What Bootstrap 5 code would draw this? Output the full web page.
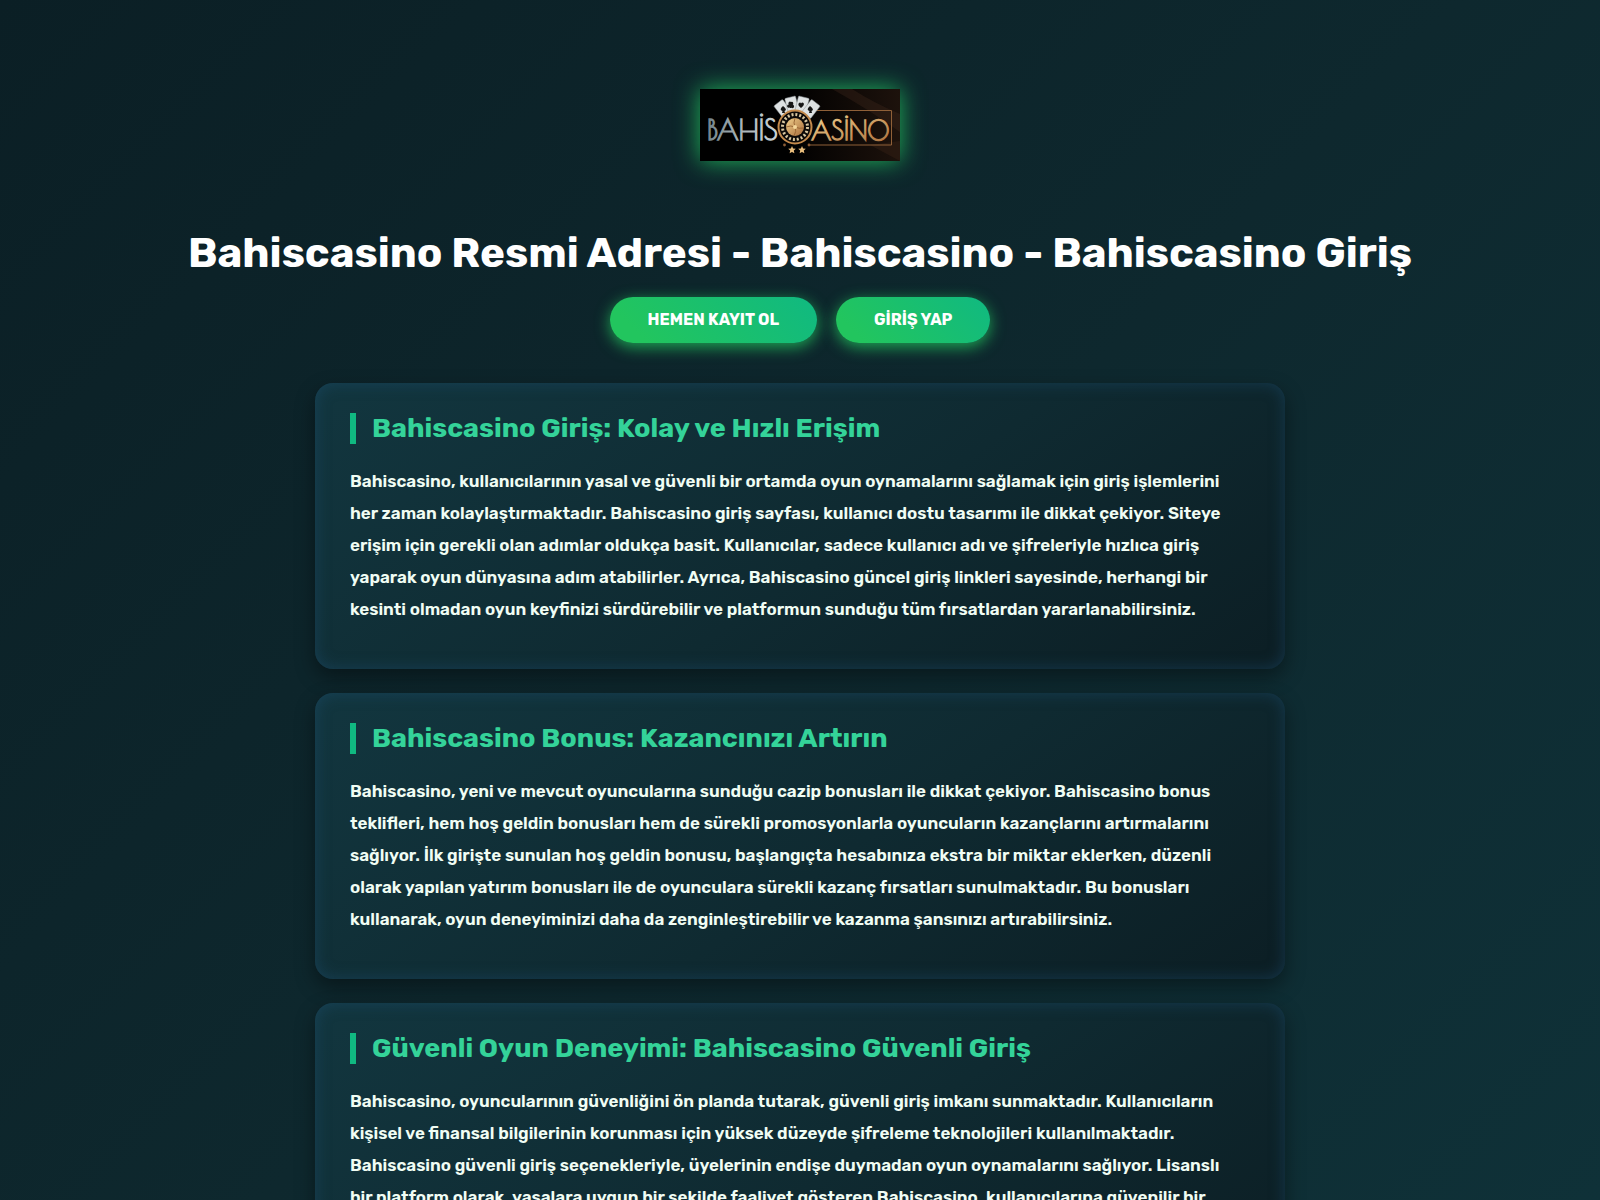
<!DOCTYPE html>
<html lang="tr">
<head>
<meta charset="utf-8">
<meta name="viewport" content="width=device-width, initial-scale=1">
<title>Bahiscasino Giriş</title>
<link href="https://cdn.jsdelivr.net/npm/bootstrap@5.3.0/dist/css/bootstrap.min.css" rel="stylesheet">
<style>
  body {
    font-family: Rubik, Inter, sans-serif;
    color: #f0fdf4;
    min-height: 100vh;
    background: linear-gradient(135deg, #0b1f25, #0e282e 50%, #0f3239);
  }
  .page-head { padding-top: 89px; }
  .brand-logo {
    display: block;
    width: 200px;
    height: 72px;
    box-shadow: 0 0 25px rgba(34, 197, 94, .9);
  }
  .main-title {
    margin: 67px 0 18px;
    font-size: 42px;
    line-height: 51px;
    font-weight: 700;
    color: #fff;
  }
  .btn-pill {
    --bs-btn-color: #fff;
    --bs-btn-hover-color: #fff;
    padding: 12px 38px;
    border: 0;
    font-size: 16px;
    line-height: 22px;
    font-weight: 700;
    background: linear-gradient(45deg, #22c55e 15%, #10b981);
    box-shadow: 0 4px 15px rgba(34, 197, 94, .8);
  }
  .btn-row { gap: 19px; }
  .info-list { max-width: 970px; gap: 24px; padding: 40px 0; }
  .info-box {
    padding: 30px 47px 44px 35px;
    border-radius: 18px;
    background: linear-gradient(145deg, #12363f, #0f2a31 55%, #0c1e24);
    box-shadow: 0 8px 20px rgba(0, 0, 0, .4), inset 0 0 15px rgba(30, 80, 115, .5);
  }
  .info-title {
    margin: 0 0 21px;
    padding-left: 16px;
    border-left: 6px solid #10b981;
    font-size: 27px;
    line-height: 31px;
    font-weight: 700;
    color: #34d399;
  }
  .info-text { margin: 0; font-size: 17px; line-height: 32px; font-weight: 600; }
  .logo-word { font-family: "Poiret One", Lato, sans-serif; stroke-width: 1.4; }
</style>
</head>
<body>
<header class="page-head container-fluid d-flex flex-column align-items-center text-center">
  <a href="#" aria-label="Bahiscasino">
    <svg class="brand-logo" viewBox="0 0 200 72" role="img" aria-hidden="true">
      <defs>
        <linearGradient id="bg" x1="0" y1="0" x2="1" y2="0"><stop offset=".45" stop-color="#000"/><stop offset="1" stop-color="#1d120c"/></linearGradient>
        <linearGradient id="silver" x1="0" y1="0" x2="1" y2="0"><stop offset="0" stop-color="#71828a"/><stop offset=".5" stop-color="#a9b4b8"/><stop offset="1" stop-color="#c9d1d3"/></linearGradient>
        <linearGradient id="gold" x1="0" y1="0" x2="1" y2="1"><stop offset="0" stop-color="#f0cf8c"/><stop offset="1" stop-color="#a86c3a"/></linearGradient>
      </defs>
      <rect width="200" height="72" fill="url(#bg)"/>
      <path d="M132 0h20q22 14 48 25v18q-30-22-68-43z" fill="#4a3020" opacity=".3"/>
      <path d="M170 56l30 16V52z" fill="#3a2416" opacity=".4"/>
      <path d="M114 21.500H191.500V56H108" fill="none" stroke="#8f6038" stroke-width="1"/>
      <g fill="#dde1e2" stroke="#8d9497" stroke-width=".5">
        <rect x="-5.500" y="-8" width="11" height="16" rx="1" transform="translate(83 20) rotate(-38)"/>
        <rect x="-5.500" y="-8" width="11" height="16" rx="1" transform="translate(92 16) rotate(-14)"/>
        <rect x="-5.500" y="-8" width="11" height="16" rx="1" transform="translate(102 16) rotate(14)"/>
        <rect x="-5.500" y="-8" width="11" height="16" rx="1" transform="translate(111 20) rotate(38)"/>
      </g>
      <g fill="#151515">
        <path d="M83 17q5 4 1.500 5l.5 2h-3l.5-2q-4-1 .5-5z"/>
        <path d="M91 13a1.600 1.600 0 1 1 1 3 1.600 1.600 0 1 1-1 2l.5 1h-2l.5-1a1.600 1.600 0 1 1-1-2.500 1.600 1.600 0 1 1 2-2.500z"/>
        <path d="M101 19q-4-3-2-5 1.500-1 2 .5 1-1.500 2.500-.5 1.500 2-2.500 5z"/>
        <path d="M110 17q5 4 1.500 5l.5 2h-3l.5-2q-4-1 .5-5z"/>
      </g>
      <circle cx="95" cy="38" r="16.500" fill="#0c0908" stroke="#c48a4c" stroke-width="2"/>
      <circle cx="95" cy="38" r="12.500" fill="none" stroke="#d9c7a0" stroke-width="3" stroke-dasharray="2 1.927"/>
      <circle cx="95" cy="38" r="9" fill="url(#gold)"/>
      <path d="M86 38q5-2 9 0t9 1M95 29q-2 5 0 9t-1 9" fill="none" stroke="#8d5a2c" stroke-width=".8"/>
      <circle cx="95" cy="38" r="2" fill="#f5d79a"/>
      <g fill="#e9bd7c">
        <path id="star" d="M92 57l1.100 2.500 2.700.3-2 1.800.6 2.700-2.400-1.400-2.400 1.400.6-2.700-2-1.800 2.700-.3z"/>
        <use href="#star" x="10"/>
        <circle cx="84.500" cy="56" r="1.400" fill="#8c5c35"/><circle cx="109" cy="56" r="1.400" fill="#8c5c35"/>
      </g>
      <text class="logo-word" x="7" y="51" font-size="27" fill="url(#silver)" stroke="url(#silver)">BAHİS</text>
      <text class="logo-word" x="111" y="51" font-size="25" fill="url(#gold)" stroke="url(#gold)">ASİNO</text>
    </svg>
  </a>
  <h1 class="main-title">Bahiscasino Resmi Adresi - Bahiscasino - Bahiscasino Giriş</h1>
  <div class="btn-row d-flex flex-wrap justify-content-center">
    <a href="#" class="btn btn-pill rounded-pill">HEMEN KAYIT OL</a>
    <a href="#" class="btn btn-pill rounded-pill">GİRİŞ YAP</a>
  </div>
</header>
<main class="info-list mx-auto d-flex flex-column">
  <section class="info-box">
    <h2 class="info-title">Bahiscasino Giriş: Kolay ve Hızlı Erişim</h2>
    <p class="info-text">Bahiscasino, kullanıcılarının yasal ve güvenli bir ortamda oyun oynamalarını sağlamak için giriş işlemlerini her zaman kolaylaştırmaktadır. Bahiscasino giriş sayfası, kullanıcı dostu tasarımı ile dikkat çekiyor. Siteye erişim için gerekli olan adımlar oldukça basit. Kullanıcılar, sadece kullanıcı adı ve şifreleriyle hızlıca giriş yaparak oyun dünyasına adım atabilirler. Ayrıca, Bahiscasino güncel giriş linkleri sayesinde, herhangi bir kesinti olmadan oyun keyfinizi sürdürebilir ve platformun sunduğu tüm fırsatlardan yararlanabilirsiniz.</p>
  </section>
  <section class="info-box">
    <h2 class="info-title">Bahiscasino Bonus: Kazancınızı Artırın</h2>
    <p class="info-text">Bahiscasino, yeni ve mevcut oyuncularına sunduğu cazip bonusları ile dikkat çekiyor. Bahiscasino bonus teklifleri, hem hoş geldin bonusları hem de sürekli promosyonlarla oyuncuların kazançlarını artırmalarını sağlıyor. İlk girişte sunulan hoş geldin bonusu, başlangıçta hesabınıza ekstra bir miktar eklerken, düzenli olarak yapılan yatırım bonusları ile de oyunculara sürekli kazanç fırsatları sunulmaktadır. Bu bonusları kullanarak, oyun deneyiminizi daha da zenginleştirebilir ve kazanma şansınızı artırabilirsiniz.</p>
  </section>
  <section class="info-box">
    <h2 class="info-title">Güvenli Oyun Deneyimi: Bahiscasino Güvenli Giriş</h2>
    <p class="info-text">Bahiscasino, oyuncularının güvenliğini ön planda tutarak, güvenli giriş imkanı sunmaktadır. Kullanıcıların kişisel ve finansal bilgilerinin korunması için yüksek düzeyde şifreleme teknolojileri kullanılmaktadır. Bahiscasino güvenli giriş seçenekleriyle, üyelerinin endişe duymadan oyun oynamalarını sağlıyor. Lisanslı bir platform olarak, yasalara uygun bir şekilde faaliyet gösteren Bahiscasino, kullanıcılarına güvenilir bir oyun deneyimi sunar.</p>
  </section>
</main>
<script src="https://cdn.jsdelivr.net/npm/bootstrap@5.3.0/dist/js/bootstrap.bundle.min.js"></script>
</body>
</html>
